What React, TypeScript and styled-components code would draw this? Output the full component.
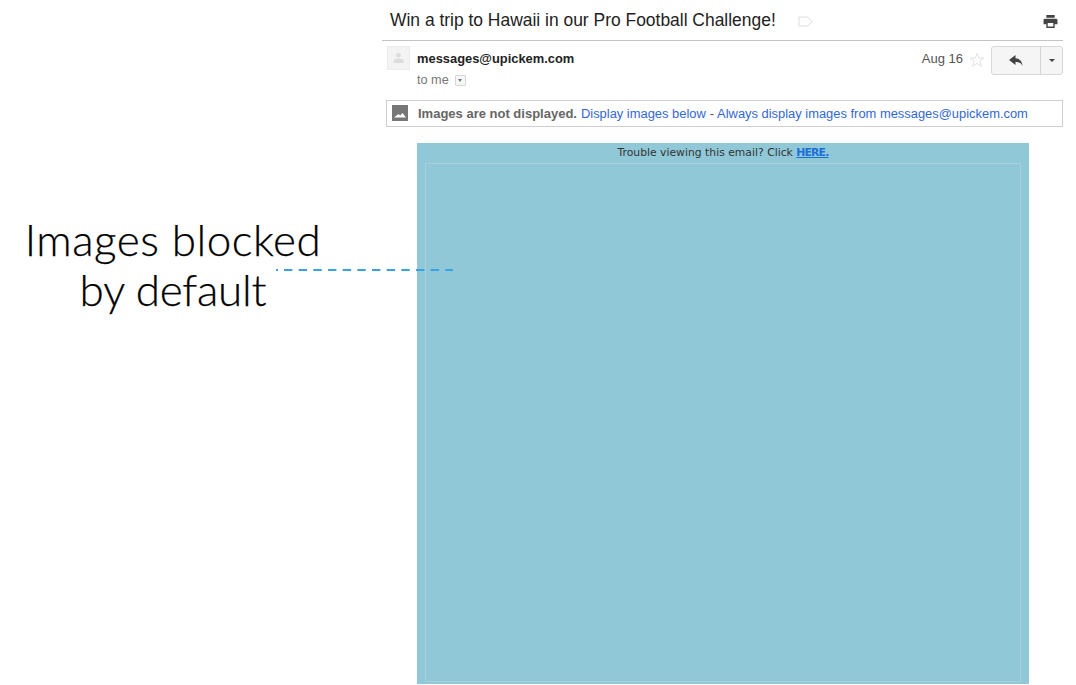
import React from "react";
import styled, { createGlobalStyle } from "styled-components";

const Global = createGlobalStyle`
  html, body { margin: 0; padding: 0; background: #fff; overflow: hidden; }
  body { font-family: "Liberation Sans", Arial, sans-serif; }
`;

const Page = styled.div`
  width: 1076px;
  height: 685px;
  display: grid;
  grid-template-columns: 382px 681px;
  position: relative;
  overflow: hidden;
`;

const Callout = styled.div`
  width: 346px;
  padding-top: 214px;
  text-align: center;
  font-family: Lato, "Open Sans", sans-serif;
  font-weight: 300;
  font-size: 44px;
  line-height: 50px;
  color: #000;
  -webkit-text-stroke: 0.25px #000;
`;

const CalloutLine = styled.div<{ $tracking: number }>`
  letter-spacing: ${(p) => p.$tracking}px;
  white-space: nowrap;
`;

const Leader = styled.svg`
  position: absolute;
  left: 276px;
  top: 269px;
  width: 178px;
  height: 2px;
`;

const Mail = styled.div`
  display: flex;
  flex-direction: column;
`;

const SubjectBar = styled.div`
  height: 41px;
  box-sizing: border-box;
  border-bottom: 1px solid #c4c4c4;
  padding: 0 4px 0 8px;
  display: flex;
  align-items: center;
`;

const Subject = styled.div`
  font-size: 17.45px;
  color: #222;
  line-height: 41px;
  margin-top: 1px;
`;

const LabelIcon = styled.svg`
  width: 15px;
  height: 11px;
  margin-left: 22px;
  margin-top: 3px;
`;

const PrintIcon = styled.svg`
  width: 15px;
  height: 13px;
  margin-left: auto;
  margin-top: 2px;
  margin-right: 1px;
`;

const Header = styled.div`
  display: flex;
  padding: 5px 0 0 5px;
  height: 59px;
  box-sizing: border-box;
`;

const Avatar = styled.div`
  width: 23px;
  height: 24px;
  background: #f3f3f3;
  border: 1px solid #ececec;
  box-sizing: border-box;
  display: flex;
  align-items: center;
  justify-content: center;
`;

const Sender = styled.div`
  margin-left: 7px;
  margin-top: 4px;
  display: flex;
  flex-direction: column;
`;

const From = styled.div`
  font-size: 12.9px;
  line-height: 17px;
  font-weight: bold;
  color: #222;
`;

const ToLine = styled.div`
  margin-top: 5px;
  font-size: 12.7px;
  line-height: 16px;
  color: #777;
  display: flex;
  align-items: center;
`;

const Caret = styled.span`
  width: 11px;
  height: 11px;
  margin-left: 6px;
  box-sizing: border-box;
  border: 1px solid #d6d6d6;
  border-radius: 1px;
  background: #f6f6f6;
  display: flex;
  align-items: center;
  justify-content: center;
  &::after {
    content: "";
    border-left: 2.5px solid transparent;
    border-right: 2.5px solid transparent;
    border-top: 3px solid #777;
  }
`;

const Right = styled.div`
  margin-left: auto;
  display: flex;
  align-items: flex-start;
`;

const DateText = styled.div`
  font-size: 13px;
  line-height: 17px;
  color: #555;
  margin-top: 4px;
`;

const StarIcon = styled.svg`
  width: 16px;
  height: 16px;
  margin: 6px 6px 0 6px;
`;

const ButtonGroup = styled.div`
  display: flex;
  width: 72px;
  height: 29px;
  box-sizing: border-box;
  border: 1px solid #d8d8d8;
  border-radius: 3px;
  background: #f5f5f5;
`;

const ReplyButton = styled.div`
  flex: 1;
  display: flex;
  align-items: center;
  justify-content: center;
`;

const MoreButton = styled.div`
  width: 21px;
  border-left: 1px solid #d4d4d4;
  display: flex;
  align-items: center;
  justify-content: center;
  &::after {
    content: "";
    border-left: 3px solid transparent;
    border-right: 3px solid transparent;
    border-top: 3.5px solid #444;
  }
`;

const Notice = styled.div`
  margin-left: 4px;
  width: 677px;
  height: 27px;
  box-sizing: border-box;
  border: 1px solid #cfcfcf;
  display: flex;
  align-items: center;
  padding: 0 0 1px 5px;
  font-size: 12.92px;
  white-space: nowrap;
`;

const NoticeIcon = styled.svg`
  width: 16px;
  height: 16px;
  margin-right: 10px;
`;

const NoticeStrong = styled.span`
  font-size: 13px;
  font-weight: bold;
  color: #666;
  margin-right: 4px;
`;

const NoticeLink = styled.span`
  color: #3367d6;
`;

const Sep = styled.span`
  color: #555;
  margin: 0 3px 0 4px;
`;

const MailBody = styled.div`
  margin: 16px 0 0 35px;
  width: 612px;
  height: 541px;
  box-sizing: border-box;
  background: #90c8d7;
  padding: 0 8px 2px;
  display: flex;
  flex-direction: column;
`;

const Trouble = styled.div`
  height: 20px;
  font-family: "DejaVu Sans", Verdana, sans-serif;
  font-size: 10.8px;
  line-height: 19px;
  color: #333;
  text-align: center;
  white-space: nowrap;
`;

const Here = styled.span`
  color: #1a6fd8;
  font-weight: bold;
  letter-spacing: -0.8px;
  text-decoration: underline;
`;

const Blocked = styled.div`
  flex: 1;
  box-sizing: border-box;
  border: 1px solid #a9d0da;
`;

export default function App() {
  return (
    <Page>
      <Global />
      <Callout>
        <CalloutLine $tracking={0.5}>Images blocked</CalloutLine>
        <CalloutLine $tracking={-0.2}>by default</CalloutLine>
      </Callout>
      <Mail>
        <SubjectBar>
          <Subject>Win a trip to Hawaii in our Pro Football Challenge!</Subject>
          <LabelIcon viewBox="0 0 15 11">
            <path
              d="M1 1h8.500L14 5.500 9.500 10H1z"
              fill="none"
              stroke="#dcdcdc"
              strokeWidth="1"
              strokeLinejoin="round"
            />
          </LabelIcon>
          <PrintIcon viewBox="0 0 15 14">
            <path
              d="M3 0h9v3H3zM1.500 4h12A1.500 1.500 0 0 1 15 5.500V10h-3v4H3v-4H0V5.500A1.500 1.500 0 0 1 1.500 4zM4.500 8.500v4h6v-4z"
              fill="#444"
              fillRule="evenodd"
            />
          </PrintIcon>
        </SubjectBar>
        <Header>
          <Avatar>
            <svg width="11" height="12" viewBox="0 0 11 12">
              <circle cx="5.500" cy="3.200" r="2.300" fill="#dcdcdc" />
              <path d="M.5 11V9C.5 7.300 3 6.500 5.500 6.500S10.500 7.300 10.500 9v2z" fill="#dcdcdc" />
            </svg>
          </Avatar>
          <Sender>
            <From>messages@upickem.com</From>
            <ToLine>
              to me
              <Caret />
            </ToLine>
          </Sender>
          <Right>
            <DateText>Aug 16</DateText>
            <StarIcon viewBox="0 0 17 17">
              <path
                d="M8.500 1.500l2 5h5.300l-4.300 3.300 1.600 5.500-4.600-3.200-4.600 3.200 1.600-5.500-4.300-3.300h5.300z"
                fill="none"
                stroke="#e0e0e0"
              />
            </StarIcon>
            <ButtonGroup>
              <ReplyButton>
                <svg width="14" height="11" viewBox="0 0 14 11">
                  <path d="M6.500 0L0 5l6.500 5V7c3 0 5.500.5 7 4C13 6 10.500 3.500 6.500 3.200z" fill="#444" />
                </svg>
              </ReplyButton>
              <MoreButton />
            </ButtonGroup>
          </Right>
        </Header>
        <Notice>
          <NoticeIcon viewBox="0 0 16 16">
            <path
              d="M0 0h16v16H0zM2 12.500h12l-3.500-4.500-2.500 2.500-1.500-1.500z"
              fill="#777"
              fillRule="evenodd"
            />
          </NoticeIcon>
          <NoticeStrong>Images are not displayed.</NoticeStrong>
          <NoticeLink>Display images below</NoticeLink>
          <Sep>-</Sep>
          <NoticeLink>Always display images from messages@upickem.com</NoticeLink>
        </Notice>
        <MailBody>
          <Trouble>
            Trouble viewing this email? Click <Here>HERE.</Here>
          </Trouble>
          <Blocked />
        </MailBody>
      </Mail>
      <Leader viewBox="0 0 178 2">
        <path d="M0 1h2" stroke="#3aa2e2" strokeWidth="2" />
        <path d="M8 1H177" stroke="#3aa2e2" strokeWidth="2" strokeDasharray="8.400 6.270" />
      </Leader>
    </Page>
  );
}
